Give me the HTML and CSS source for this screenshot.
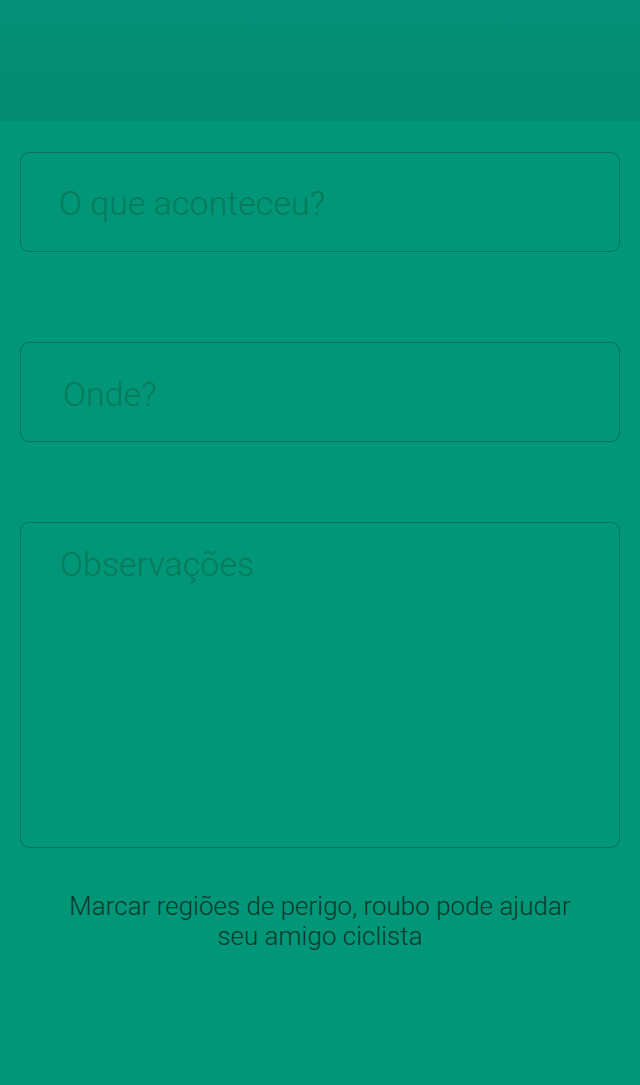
FILE: index.html
```html
<!DOCTYPE html>
<html lang="pt">
<head>
<meta charset="utf-8">
<title>Reportar</title>
<link rel="stylesheet" href="styles.css">
</head>
<body>
<header class="topbar"></header>
<main class="form">
  <input class="field field-what" type="text" placeholder="O que aconteceu?">
  <input class="field field-where" type="text" placeholder="Onde?">
  <textarea class="field field-notes" placeholder="Observações"></textarea>
  <p class="hint">Marcar regiões de perigo, roubo pode ajudar<br>seu amigo ciclista</p>
</main>
</body>
</html>
```
FILE: styles.css
```css
html, body {
  margin: 0;
  padding: 0;
  background: #009677;
  font-family: Roboto, "Noto Sans", sans-serif;
}
.topbar {
  height: 121px;
  background: linear-gradient(#059078, #038b6f);
}
.form {
  display: flex;
  flex-direction: column;
  padding: 31px 20px 0;
}
.field {
  box-sizing: border-box;
  width: 600px;
  margin: 0;
  border: 1px solid #0b6f57;
  border-radius: 9px;
  background: transparent;
  font-family: Roboto, sans-serif;
  font-size: 34px;
  font-weight: 300;
  color: #077a5d;
  outline: none;
}
.field::placeholder {
  color: #087a5d;
  opacity: 1;
  font-weight: 300;
}
.field-what {
  height: 100px;
  padding: 2px 0 0 38px;
}
.field-where {
  height: 100px;
  margin-top: 90px;
  padding: 4px 0 0 42px;
}
.field-notes {
  height: 326px;
  margin-top: 80px;
  padding: 22px 0 0 39px;
  resize: none;
  line-height: 38px;
}
.hint {
  margin: 43px 0 0;
  text-align: center;
  font-size: 26px;
  font-weight: 300;
  line-height: 30px;
  color: #0b3a2e;
}
```
